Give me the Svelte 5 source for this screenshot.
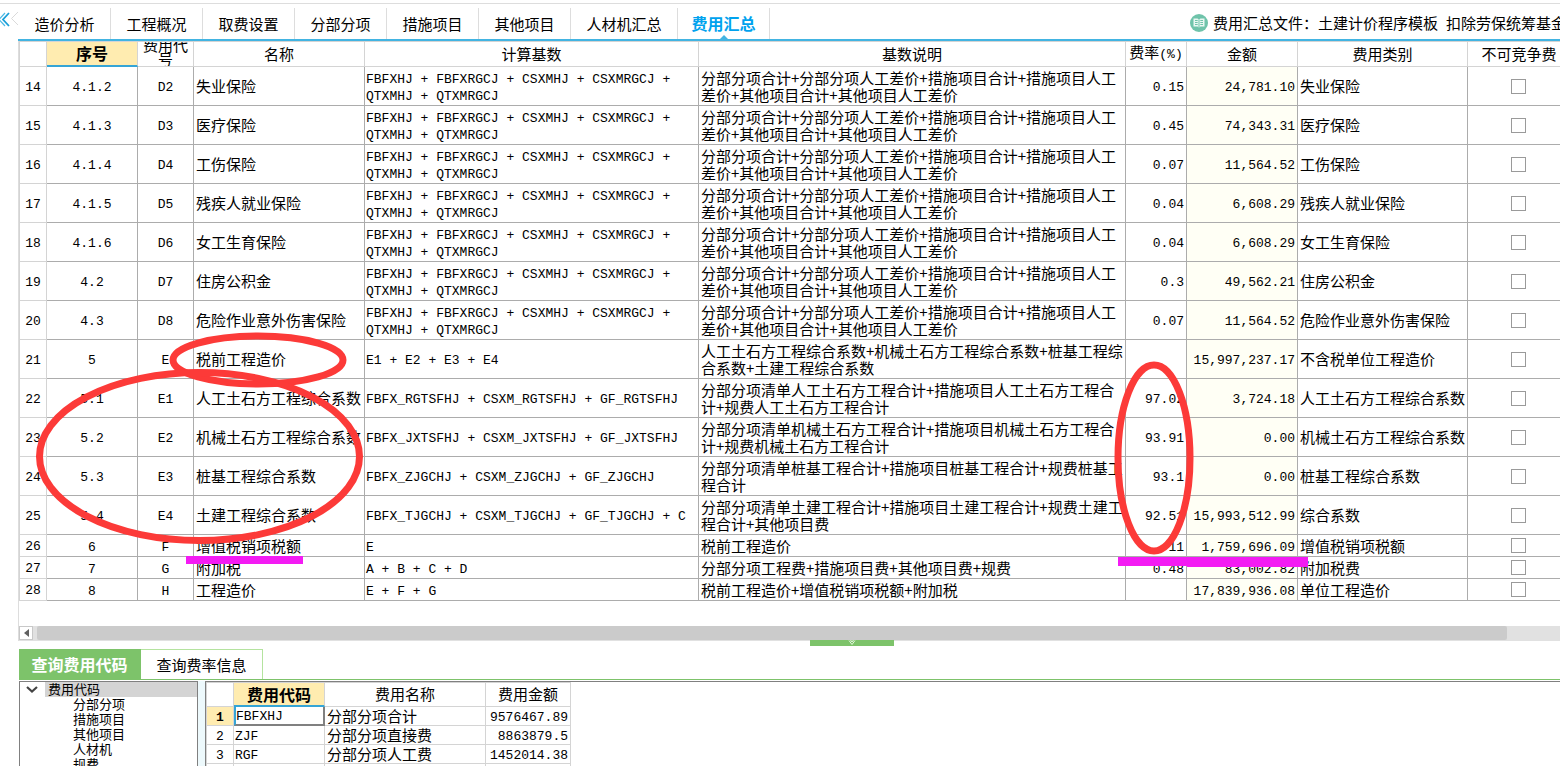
<script>
  const tabs = ['造价分析', '工程概况', '取费设置', '分部分项', '措施项目', '其他项目', '人材机汇总', '费用汇总'];
  let activeTab = $state('费用汇总');

  const insuranceBase = 'FBFXHJ + FBFXRGCJ + CSXMHJ + CSXMRGCJ + QTXMHJ + QTXMRGCJ';
  const insuranceNote =
    '分部分项合计+分部分项人工差价+措施项目合计+措施项目人工差价+其他项目合计+其他项目人工差价';

  const insurance = (no, seq, code, name, rate, amount) => ({
    no, seq, code, name, base: insuranceBase, note: insuranceNote, rate, amount, kind: name
  });

  const rows = [
    insurance(14, '4.1.2', 'D2', '失业保险', '0.15', '24,781.10'),
    insurance(15, '4.1.3', 'D3', '医疗保险', '0.45', '74,343.31'),
    insurance(16, '4.1.4', 'D4', '工伤保险', '0.07', '11,564.52'),
    insurance(17, '4.1.5', 'D5', '残疾人就业保险', '0.04', '6,608.29'),
    insurance(18, '4.1.6', 'D6', '女工生育保险', '0.04', '6,608.29'),
    insurance(19, '4.2', 'D7', '住房公积金', '0.3', '49,562.21'),
    insurance(20, '4.3', 'D8', '危险作业意外伤害保险', '0.07', '11,564.52'),
    { no: 21, seq: '5', code: 'E', name: '税前工程造价', base: 'E1 + E2 + E3 + E4', note: '人工土石方工程综合系数+机械土石方工程综合系数+桩基工程综合系数+土建工程综合系数', rate: '', amount: '15,997,237.17', kind: '不含税单位工程造价' },
    { no: 22, seq: '5.1', code: 'E1', name: '人工土石方工程综合系数', base: 'FBFX_RGTSFHJ + CSXM_RGTSFHJ + GF_RGTSFHJ', note: '分部分项清单人工土石方工程合计+措施项目人工土石方工程合计+规费人工土石方工程合计', rate: '97.02', amount: '3,724.18', kind: '人工土石方工程综合系数' },
    { no: 23, seq: '5.2', code: 'E2', name: '机械土石方工程综合系数', base: 'FBFX_JXTSFHJ + CSXM_JXTSFHJ + GF_JXTSFHJ', note: '分部分项清单机械土石方工程合计+措施项目机械土石方工程合计+规费机械土石方工程合计', rate: '93.91', amount: '0.00', kind: '机械土石方工程综合系数' },
    { no: 24, seq: '5.3', code: 'E3', name: '桩基工程综合系数', base: 'FBFX_ZJGCHJ + CSXM_ZJGCHJ + GF_ZJGCHJ', note: '分部分项清单桩基工程合计+措施项目桩基工程合计+规费桩基工程合计', rate: '93.1', amount: '0.00', kind: '桩基工程综合系数' },
    { no: 25, seq: '5.4', code: 'E4', name: '土建工程综合系数', base: 'FBFX_TJGCHJ + CSXM_TJGCHJ + GF_TJGCHJ + C', note: '分部分项清单土建工程合计+措施项目土建工程合计+规费土建工程合计+其他项目费', rate: '92.51', amount: '15,993,512.99', kind: '综合系数' },
    { no: 26, seq: '6', code: 'F', name: '增值税销项税额', base: 'E', note: '税前工程造价', rate: '11', amount: '1,759,696.09', kind: '增值税销项税额', short: true },
    { no: 27, seq: '7', code: 'G', name: '附加税', base: 'A + B + C + D', note: '分部分项工程费+措施项目费+其他项目费+规费', rate: '0.48', amount: '83,002.82', kind: '附加税费', short: true },
    { no: 28, seq: '8', code: 'H', name: '工程造价', base: 'E + F + G', note: '税前工程造价+增值税销项税额+附加税', rate: '', amount: '17,839,936.08', kind: '单位工程造价', short: true }
  ];

  const tree = ['分部分项', '措施项目', '其他项目', '人材机', '规费'];

  const codes = [
    ['FBFXHJ', '分部分项合计', '9576467.89'],
    ['ZJF', '分部分项直接费', '8863879.5'],
    ['RGF', '分部分项人工费', '1452014.38']
  ];
</script>

<div class="app">
  <aside class="gutter">
    <button class="collapse" aria-label="收起">
      <svg width="18" height="20" viewBox="0 0 18 20" fill="none">
        <path d="M5 3 L-1 9.500 L5 16" stroke="#4cb9e6" stroke-width="1.2" />
        <path d="M9 3 L3 9.500 L9 16" stroke="#1b9fd8" stroke-width="1.8" />
        <path d="M18 2 L11.500 8.500 L18 15" stroke="#dadada" />
      </svg>
    </button>
  </aside>

  <main>
    <nav>
      {#each tabs as tab}
        <button
          class="tab"
          class:wide={tab.length > 4}
          class:active={tab === activeTab}
          onclick={() => (activeTab = tab)}>{tab}</button>
      {/each}
      <div class="template">
        <svg width="18" height="18" viewBox="0 0 18 18">
          <circle cx="9" cy="9" r="9" fill="#6fc3aa" />
          <path d="M3.500 4.500 H7.500 L9 5.500 L10.500 4.500 H14.500 V12.500 H10.500 L9 13.500 L7.500 12.500 H3.500 Z" fill="#e9f7f2" />
          <path d="M9 5.500 V13 M5 6.500 H7.700 M5 8.500 H7.700 M5 10.500 H7.700 M10.300 6.500 H13 M10.300 8.500 H13 M10.300 10.500 H13" stroke="#6fc3aa" stroke-width="1" />
        </svg>
        <span class="file">费用汇总文件：土建计价程序模板</span>
        <span>扣除劳保统筹基金</span>
      </div>
    </nav>

    <section class="sheet">
      <table class="summary">
        <colgroup>
          <col class="w-no" /><col class="w-seq" /><col class="w-code" /><col class="w-name" /><col class="w-base" />
          <col /><col class="w-rate" /><col class="w-amount" /><col class="w-kind" /><col class="w-flag" />
        </colgroup>
        <thead>
          <tr>
            <th></th>
            <th class="picked">序号</th>
            <th class="wrap"><div class="clip">费用代号</div></th>
            <th>名称</th>
            <th>计算基数</th>
            <th>基数说明</th>
            <th>费率<span class="mono">(%)</span></th>
            <th>金额</th>
            <th>费用类别</th>
            <th>不可竞争费</th>
          </tr>
        </thead>
        <tbody>
          {#each rows as row}
            <tr class:short={row.short}>
              <td class="no mono">{row.no}</td>
              <td class="mono center">{row.seq}</td>
              <td class="mono center">{row.code}</td>
              <td class="name">{row.name}</td>
              <td class="mono">{row.base}</td>
              <td class="note">{row.note}</td>
              <td class="mono right">{row.rate}</td>
              <td class="mono right amount">{row.amount}</td>
              <td class="name">{row.kind}</td>
              <td class="check"><input type="checkbox" aria-label="不可竞争费" /></td>
            </tr>
          {/each}
        </tbody>
      </table>

      <div class="scroll">
        <button class="arrow" aria-label="向左滚动">
          <svg width="5" height="8" viewBox="0 0 5 8"><path d="M5 0 V8 L0 4 Z" fill="#606060" /></svg>
        </button>
        <div class="thumb"></div>
      </div>
    </section>

    <div class="splitter">
      <button class="grip" aria-label="折叠">
        <svg width="8" height="6" viewBox="0 0 8 6" fill="none">
          <path d="M1 0.500 L4 4.500 L7 0.500 M2.500 0 L4 2 L5.500 0" stroke="#e4f5df" />
        </svg>
      </button>
    </div>

    <section class="lookup">
      <div class="subtabs">
        <button class="subtab on">查询费用代码</button>
        <button class="subtab">查询费率信息</button>
      </div>
      <div class="panels">
        <div class="tree">
          <div class="root">
            <svg width="25" height="15" viewBox="0 0 25 15" fill="none">
              <path d="M7 5 L12 9.500 L17 5" stroke="#444" stroke-width="2.200" />
            </svg>
            <span>费用代码</span>
          </div>
          <ul>
            {#each tree as item}
              <li>{item}</li>
            {/each}
          </ul>
        </div>
        <div class="result">
          <table class="codes">
            <colgroup><col class="w-no" /><col class="w-seq" /><col class="c-name" /><col class="c-amount" /></colgroup>
            <thead>
              <tr><th></th><th class="picked">费用代码</th><th>费用名称</th><th>费用金额</th></tr>
            </thead>
            <tbody>
              {#each codes as [code, name, amount], i}
                <tr>
                  <td class="no mono" class:current={i === 0}>{i + 1}</td>
                  <td class="mono" class:cursor={i === 0}>{code}</td>
                  <td>{name}</td>
                  <td class="mono right">{amount}</td>
                </tr>
              {/each}
              <tr><td class="no"></td><td></td><td></td><td></td></tr>
            </tbody>
          </table>
        </div>
      </div>
    </section>
  </main>

  <!-- Hand-drawn review marks over the sheet -->
  <svg class="marks" width="1560" height="640" viewBox="0 0 1560 640" fill="none">
    <g stroke="#fc3a38" stroke-width="7">
      <ellipse cx="258" cy="360" rx="85" ry="24" />
      <ellipse cx="199.500" cy="456.500" rx="160" ry="84" />
      <ellipse cx="1154" cy="458" rx="36" ry="93" />
    </g>
    <g fill="#f31bf3">
      <rect x="186" y="556" width="117" height="8" />
      <rect x="1118" y="557" width="69" height="9" />
      <rect x="1187" y="557" width="121" height="10" />
    </g>
  </svg>
</div>

<style>
  :global(body) {
    margin: 0;
    background: #fff;
    overflow: hidden;
  }

  .app {
    position: relative;
    display: flex;
    height: 100vh;
    box-sizing: border-box;
    padding-top: 3px;
    overflow: hidden;
    color: #000;
    font: 15px/17px 'Noto Sans CJK SC', 'Liberation Sans', sans-serif;
  }

  button {
    margin: 0;
    padding: 0;
    border: 0;
    background: none;
    color: inherit;
    font: inherit;
    cursor: pointer;
  }

  .mono {
    font-family: 'Liberation Mono', 'Noto Sans CJK SC', monospace;
    font-size: 13px;
  }

  .gutter {
    flex: none;
    width: 18px;
    border-top: 1px solid #ddd;
  }

  .collapse {
    display: block;
    margin-top: 6px;
  }

  .collapse svg {
    display: block;
  }

  main {
    flex: 1;
    min-width: 0;
    display: flex;
    flex-direction: column;
  }

  nav {
    display: flex;
    padding: 4px 0 0 1px;
    border-top: 1px solid #ddd;
    border-bottom: 2px solid #42b4e2;
  }

  .tab {
    position: relative;
    flex: none;
    width: 92px;
    height: 31px;
    padding-bottom: 1px;
    border-right: 1px solid #ddd;
    white-space: nowrap;
  }

  .tab.wide {
    width: 107px;
  }

  .tab.active {
    color: #00a2ee;
    font-weight: 700;
    font-size: 16px;
  }

  .tab.active::after {
    content: '';
    position: absolute;
    left: 50%;
    bottom: 0;
    margin-left: -4px;
    border: 4px solid transparent;
    border-top: 0;
    border-bottom-color: #42b4e2;
  }

  .template {
    display: flex;
    align-items: center;
    box-sizing: border-box;
    flex: none;
    width: 370px;
    height: 31px;
    padding-bottom: 2px;
    margin-left: auto;
    overflow: hidden;
    white-space: nowrap;
  }

  .template svg,
  .template span {
    flex: none;
  }

  .template .file {
    margin: 0 8px 0 5px;
  }

  .sheet {
    border-left: 1px solid #ddd;
    overflow: hidden;
  }

  table {
    table-layout: fixed;
    border-collapse: separate;
    border-spacing: 0;
  }

  .summary {
    width: calc(100% + 11px);
    min-width: 1300px;
    border-top: 1px solid #d4d4d4;
    border-left: 1px solid #d4d4d4;
  }

  .w-no { width: 27px; }
  .w-seq { width: 91px; }
  .w-code { width: 56px; }
  .w-name { width: 171px; }
  .w-base { width: 334px; }
  .w-rate { width: 61px; }
  .w-amount { width: 111px; }
  .w-kind { width: 170px; }
  .w-flag { width: 103px; }
  .c-name { width: 161px; }
  .c-amount { width: 85px; }

  th,
  td {
    box-sizing: border-box;
    padding: 0 1px 1px 2px;
    border-right: 1px solid #acacac;
    border-bottom: 1px solid #acacac;
    overflow: hidden;
    text-align: left;
    vertical-align: middle;
  }

  th {
    height: 25px;
    padding: 0 0 2px;
    border-color: #d4d4d4;
    font-weight: 400;
    text-align: center;
    white-space: nowrap;
  }

  th.picked {
    padding-bottom: 0;
    border-bottom: 2px solid #35a5d6;
    background: #ffecb0;
    font-weight: 700;
    font-size: 16px;
  }

  th.wrap {
    padding: 0;
  }

  .clip {
    display: flex;
    align-items: center;
    box-sizing: border-box;
    height: 24px;
    padding: 0 4px 4px;
    line-height: 14px;
    white-space: normal;
  }

  .summary td {
    height: 39px;
  }

  .summary .short td {
    height: 22px;
  }

  td.mono {
    padding: 3px 1px 0;
  }

  td.no {
    padding: 2px 0 0;
    border-color: #d4d4d4;
    text-align: center;
  }

  td.center {
    text-align: center;
  }

  td.check {
    padding: 0 1px 0 0;
  }

  td.right {
    padding-right: 2px;
    text-align: right;
  }

  .name {
    white-space: nowrap;
  }

  .amount {
    background: #fffff5;
  }

  input {
    appearance: none;
    display: block;
    box-sizing: border-box;
    width: 15px;
    height: 15px;
    margin: 0 auto;
    border: 1px solid #9a9a9a;
    background: #fff;
  }

  .scroll {
    display: flex;
    gap: 4px;
    height: 14px;
    margin-top: 25px;
    border-bottom: 1px solid #e1e1e1;
    background: #e1e1e1;
  }

  .arrow {
    display: grid;
    place-items: center;
    box-sizing: border-box;
    width: 14px;
    height: 14px;
    border: 1px solid #c8c8c8;
    background: #fff;
  }

  .thumb {
    flex: 1;
    margin-right: 53px;
    border-radius: 2px;
    background: #cbcbcb;
  }

  .splitter {
    position: relative;
    flex: none;
    height: 8px;
  }

  .grip {
    position: absolute;
    top: -1px;
    left: calc(50% + 21px);
    display: flex;
    justify-content: center;
    width: 84px;
    height: 6px;
    background: #7dc36a;
  }

  .lookup {
    flex: 1;
    min-height: 0;
    display: flex;
    flex-direction: column;
    margin-left: 1px;
  }

  .subtabs {
    display: flex;
    flex: none;
    border-bottom: 1px solid #7dc36a;
  }

  .subtab {
    box-sizing: border-box;
    width: 122px;
    height: 30px;
    border: 1px solid #b4e39f;
    border-width: 1px 1px 0 0;
  }

  .subtab.on {
    border-color: #7dc36a;
    background: #7dc36a;
    color: #fff;
    font-weight: 700;
    font-size: 16px;
  }

  .panels {
    flex: 1;
    min-height: 0;
    display: flex;
    gap: 7px;
    margin-top: 1px;
    background: #edf9fc;
  }

  .tree {
    box-sizing: border-box;
    width: 179px;
    border: 1px solid #808080;
    border-bottom: 0;
    overflow: hidden;
    background: #fff;
    font-size: 13px;
    line-height: 15px;
  }

  .root {
    display: flex;
    height: 15px;
  }

  .root span {
    flex: 1;
    padding-left: 3px;
    background: #d4d4d4;
    line-height: 13px;
  }

  ul {
    margin: -1px 0 0;
    padding: 0 0 0 53px;
    list-style: none;
  }

  .result {
    flex: 1;
    border-top: 1px solid #808080;
    border-left: 1px solid #808080;
    overflow: hidden;
    background: #fff;
  }

  .codes {
    width: 365px;
    border-top: 1px solid #d4d4d4;
    border-left: 1px solid #d4d4d4;
  }

  .codes th {
    height: 24px;
  }

  .codes td {
    height: 19px;
    padding-top: 0;
    border-color: #d4d4d4;
    line-height: 15px;
  }

  .codes td.mono {
    padding-top: 2px;
  }

  .codes .current {
    background: #ffecb0;
    font-weight: 700;
  }

  .codes td.cursor {
    padding-left: 0;
    border-left: 2px solid #35a5d6;
    border-right: 2px solid #808080;
    border-bottom: 2px solid #808080;
  }

  .marks {
    position: absolute;
    top: 0;
    left: 0;
    pointer-events: none;
  }
</style>
